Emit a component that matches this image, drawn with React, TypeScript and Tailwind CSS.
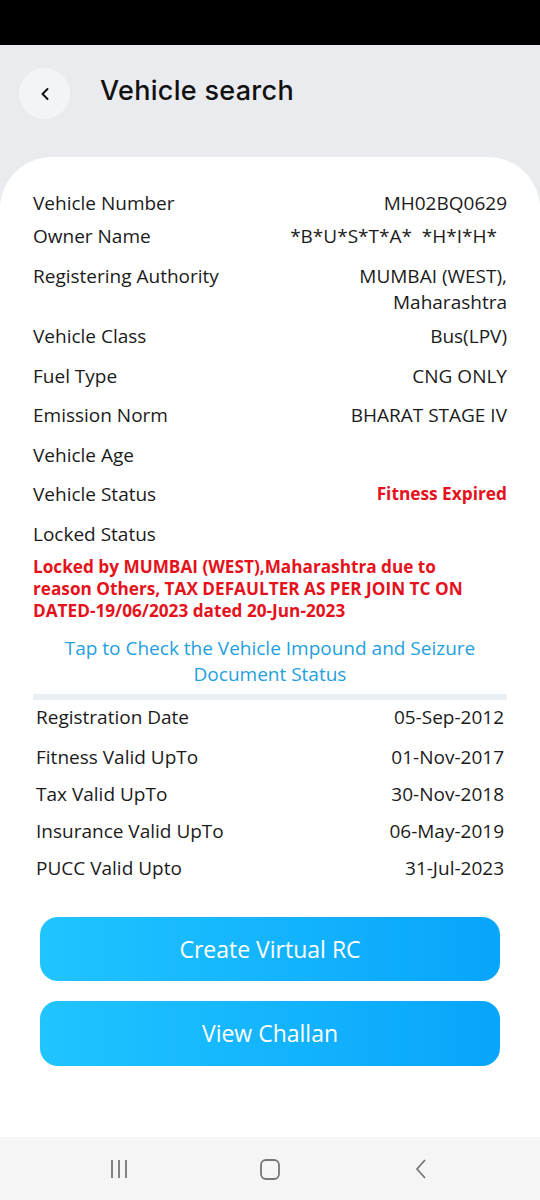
import React from "react";

type Row = { label: string; value: React.ReactNode; mt: string; valueClass?: string };

const body = { fontFamily: '"Open Sans", "Noto Sans", sans-serif' };

function InfoRow({ label, value, mt, valueClass }: Row) {
  return (
    <div className={`flex justify-between items-start ${mt}`}>
      <span className="text-[19px] leading-[26px] text-[#1b1b1b]">{label}</span>
      <span className={`leading-[26px] text-right ${valueClass ?? "text-[19px] text-[#1b1b1b]"}`}>{value}</span>
    </div>
  );
}

export default function App() {
  return (
    <div className="w-[540px] min-h-[1200px] flex flex-col bg-[#e9ebee]" style={body}>
      {/* status bar */}
      <div className="h-[45px] bg-black shrink-0" />

      {/* header */}
      <div className="h-[112px] shrink-0 flex items-start pt-[23px] pl-[19px]">
        <button className="w-[51px] h-[51px] rounded-full bg-[#f3f4f6] flex items-center justify-center">
          <svg width="14" height="16" viewBox="0 0 14 16" fill="none">
            <path d="M9.5 3 L4.5 8 L9.5 13" stroke="#111" strokeWidth="2" strokeLinecap="round" strokeLinejoin="round" />
          </svg>
        </button>
        <h1
          className="ml-[30px] mt-[3px] text-[27px] leading-[40px] font-medium text-[#111] tracking-[0.3px]"
          style={{ fontFamily: 'Inter, "Noto Sans", sans-serif' }}
        >
          Vehicle search
        </h1>
      </div>

      {/* details card */}
      <div className="flex-1 bg-white rounded-t-[52px] px-[33px] pt-[33px] flex flex-col">
        <InfoRow label="Vehicle Number" value="MH02BQ0629" mt="mt-0" />
        <InfoRow label="Owner Name" value={<span className="pr-[10px]">*B*U*S*T*A*&nbsp; *H*I*H*</span>} mt="mt-[7px]" />
        <InfoRow
          label="Registering Authority"
          value={
            <>
              MUMBAI (WEST),
              <br />
              Maharashtra
            </>
          }
          mt="mt-[14px]"
        />
        <InfoRow label="Vehicle Class" value="Bus(LPV)" mt="mt-[8px]" />
        <InfoRow label="Fuel Type" value="CNG ONLY" mt="mt-[14px]" />
        <InfoRow label="Emission Norm" value="BHARAT STAGE IV" mt="mt-[13px]" />
        <InfoRow label="Vehicle Age" value="" mt="mt-[14px]" />
        <InfoRow
          label="Vehicle Status"
          value="Fitness Expired"
          mt="mt-[13px]"
          valueClass="font-bold text-[#e5121b] text-[17.3px]"
        />
        <InfoRow label="Locked Status" value="" mt="mt-[14px]" />

        <p className="mt-[9px] text-[17.2px] leading-[22px] font-bold text-[#e5121b] pr-[20px]">
          Locked by MUMBAI (WEST),Maharashtra due to reason Others, TAX DEFAULTER AS PER JOIN TC ON DATED-19/06/2023 dated 20-Jun-2023
        </p>

        <p className="mt-[13px] text-[19px] leading-[26px] text-center text-[#1fa0df] px-[10px]">
          Tap to Check the Vehicle Impound and Seizure Document Status
        </p>

        <div className="mt-[7px] h-[6px] bg-[#eaeff3]" />

        <div className="px-[3px]">
          <InfoRow label="Registration Date" value="05-Sep-2012" mt="mt-[4px]" />
          <InfoRow label="Fitness Valid UpTo" value="01-Nov-2017" mt="mt-[14px]" />
          <InfoRow label="Tax Valid UpTo" value="30-Nov-2018" mt="mt-[11px]" />
          <InfoRow label="Insurance Valid UpTo" value="06-May-2019" mt="mt-[11px]" />
          <InfoRow label="PUCC Valid Upto" value="31-Jul-2023" mt="mt-[11px]" />
        </div>

        <div className="px-[7px] flex flex-col">
          <button className="mt-[36px] h-[64px] rounded-[18px] bg-gradient-to-r from-[#20c4ff] to-[#07a5fb] text-white text-[23px]">
            Create Virtual RC
          </button>
          <button className="mt-[20px] h-[65px] rounded-[18px] bg-gradient-to-r from-[#20c4ff] to-[#07a5fb] text-white text-[23px]">
            View Challan
          </button>
        </div>
      </div>

      {/* system navigation bar */}
      <div className="h-[63px] shrink-0 bg-[#f5f5f5] flex items-center justify-center gap-[111px]">
        <div className="w-[40px] flex justify-center">
          <svg width="20" height="22" viewBox="0 0 20 22">
            <path d="M3 2v18M10 2v18M17 2v18" stroke="#777" strokeWidth="1.8" />
          </svg>
        </div>
        <div className="w-[40px] flex justify-center">
          <svg width="22" height="22" viewBox="0 0 22 22">
            <rect x="2" y="2" width="18" height="19" rx="5" fill="none" stroke="#777" strokeWidth="1.8" />
          </svg>
        </div>
        <div className="w-[40px] flex justify-center">
          <svg width="16" height="22" viewBox="0 0 16 22">
            <path d="M12 2 L4 11 L12 20" fill="none" stroke="#777" strokeWidth="1.8" />
          </svg>
        </div>
      </div>
    </div>
  );
}
